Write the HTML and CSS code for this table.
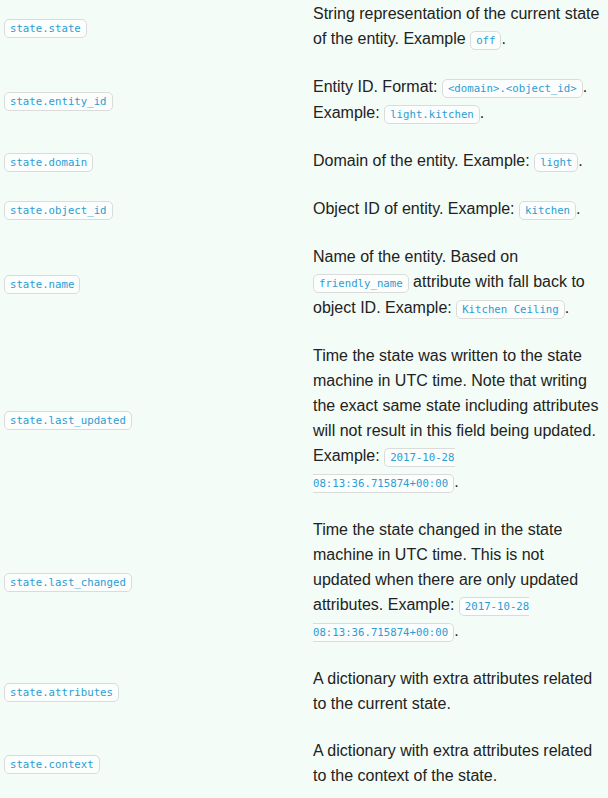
FILE: index.html
```html
<!DOCTYPE html>
<html>
<head>
<meta charset="utf-8">
<link rel="stylesheet" href="styles.css">
</head>
<body>
<table class="attrs">
  <tbody>
    <tr><td class="k"><code>state.state</code></td><td class="d">String representation of the current state of the entity. Example <code>off</code>.</td></tr>
    <tr><td class="k"><code>state.entity_id</code></td><td class="d">Entity ID. Format: <code>&lt;domain&gt;.&lt;object_id&gt;</code>. Example: <code>light.kitchen</code>.</td></tr>
    <tr><td class="k"><code>state.domain</code></td><td class="d">Domain of the entity. Example: <code>light</code>.</td></tr>
    <tr><td class="k"><code>state.object_id</code></td><td class="d">Object ID of entity. Example: <code>kitchen</code>.</td></tr>
    <tr><td class="k"><code>state.name</code></td><td class="d">Name of the entity. Based on <code>friendly_name</code> attribute with fall back to object ID. Example: <code>Kitchen Ceiling</code>.</td></tr>
    <tr><td class="k"><code>state.last_updated</code></td><td class="d">Time the state was written to the state machine in UTC time. Note that writing the exact same state including attributes will not result in this field being updated. Example: <code>2017-10-28 08:13:36.715874+00:00</code>.</td></tr>
    <tr><td class="k"><code>state.last_changed</code></td><td class="d">Time the state changed in the state machine in UTC time. This is not updated when there are only updated attributes. Example: <code>2017-10-28 08:13:36.715874+00:00</code>.</td></tr>
    <tr><td class="k"><code>state.attributes</code></td><td class="d">A dictionary with extra attributes related to the current state.</td></tr>
    <tr><td class="k"><code>state.context</code></td><td class="d">A dictionary with extra attributes related to the context of the state.</td></tr>
  </tbody>
</table>
</body>
</html>
```
FILE: styles.css
```css
html, body {
  margin: 0;
  padding: 0;
  background: #f3fcf6;
}
body {
  font-family: "Liberation Sans", Arial, sans-serif;
  font-size: 16px;
  line-height: 25px;
  color: #222;
}
.attrs {
  border-collapse: collapse;
  width: 608px;
  margin-top: -10px;
}
.attrs td {
  padding: 11px 0;
  vertical-align: middle;
}
.attrs td.k {
  width: 309px;
  padding-left: 4px;
}
.attrs td.d {
  padding-right: 6px;
}
code {
  font-family: "DejaVu Sans Mono", monospace;
  font-size: 10.7px;
  line-height: 22px;
  color: #2a9dd3;
  background: #fcfdfd;
  border: 1px solid #d9dcdb;
  border-radius: 5px;
  padding: 2px 5px;
}
```
